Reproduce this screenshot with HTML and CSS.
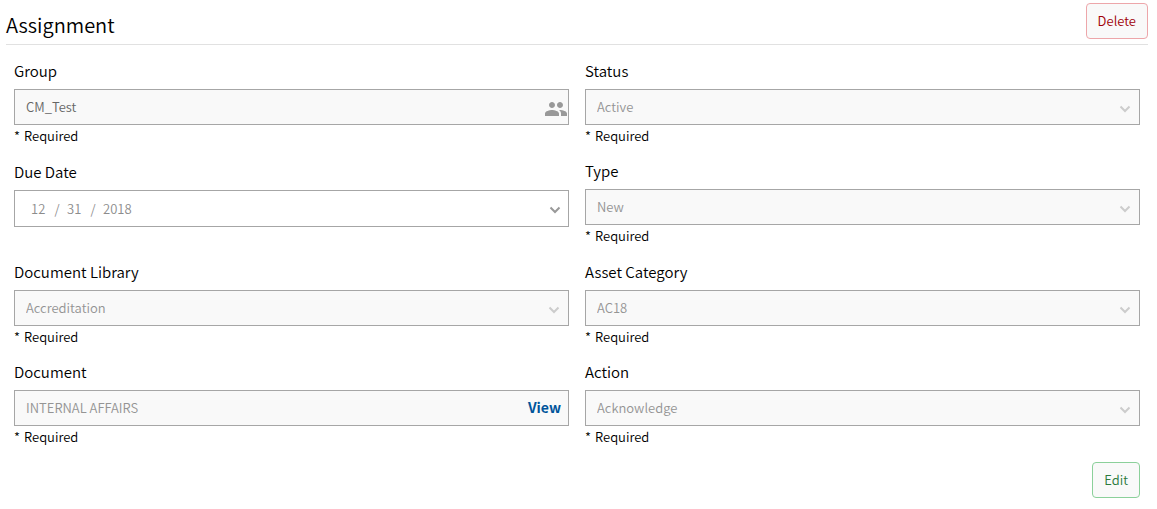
FILE: index.html
```html
<!DOCTYPE html>
<html lang="en">
<head>
<meta charset="utf-8">
<meta name="viewport" content="width=device-width, initial-scale=1">
<title>Assignment</title>
<link rel="stylesheet" href="styles.css">
</head>
<body>
<form class="assignment">
  <header class="header">
    <h1 class="title">Assignment</h1>
    <button class="btn btn-delete" type="button">Delete</button>
  </header>
  <div class="fields">
    <div class="field">
      <label class="label" for="group">Group</label>
      <div class="box">
        <input class="control control-group" id="group" type="text" value="CM_Test" readonly>
        <svg class="people" viewBox="1 5 22 14" aria-hidden="true"><path d="M16 11c1.66 0 2.99-1.34 2.99-3S17.66 5 16 5s-3 1.34-3 3 1.34 3 3 3zm-8 0c1.66 0 2.99-1.34 2.99-3S9.66 5 8 5 5 6.34 5 8s1.34 3 3 3zm0 2c-2.33 0-7 1.17-7 3.5V19h14v-2.500c0-2.330-4.670-3.500-7-3.500zm8 0c-.29 0-.62.02-.97.05 1.160.84 1.970 1.970 1.970 3.450V19h6v-2.500c0-2.330-4.670-3.500-7-3.500z"/></svg>
      </div>
      <p class="note"><span>*</span><span>Required</span></p>
    </div>
    <div class="field">
      <label class="label" for="status">Status</label>
      <div class="box">
        <select class="control" id="status" disabled><option>Active</option></select>
        <svg class="chevron" viewBox="0 0 12 8" aria-hidden="true"><path d="M1.500 1.500 6 6l4.500-4.500"/></svg>
      </div>
      <p class="note"><span>*</span><span>Required</span></p>
    </div>
    <div class="field field-date">
      <label class="label" for="month">Due Date</label>
      <div class="box box-date">
        <input class="date-part" id="month" type="text" value="12" aria-label="Month">
        <span class="slash">/</span>
        <input class="date-part" type="text" value="31" aria-label="Day">
        <span class="slash">/</span>
        <input class="date-part date-year" type="text" value="2018" aria-label="Year">
        <button class="date-toggle" type="button" aria-label="Open calendar"><svg class="chevron chevron-date" viewBox="0 0 12 8" aria-hidden="true"><path d="M1.500 1.500 6 6l4.500-4.500"/></svg></button>
      </div>
    </div>
    <div class="field">
      <label class="label" for="type">Type</label>
      <div class="box">
        <select class="control" id="type" disabled><option>New</option></select>
        <svg class="chevron" viewBox="0 0 12 8" aria-hidden="true"><path d="M1.500 1.500 6 6l4.500-4.500"/></svg>
      </div>
      <p class="note"><span>*</span><span>Required</span></p>
    </div>
    <div class="field">
      <label class="label" for="library">Document Library</label>
      <div class="box">
        <select class="control" id="library" disabled><option>Accreditation</option></select>
        <svg class="chevron" viewBox="0 0 12 8" aria-hidden="true"><path d="M1.500 1.500 6 6l4.500-4.500"/></svg>
      </div>
      <p class="note"><span>*</span><span>Required</span></p>
    </div>
    <div class="field">
      <label class="label" for="category">Asset Category</label>
      <div class="box">
        <select class="control" id="category" disabled><option>AC18</option></select>
        <svg class="chevron" viewBox="0 0 12 8" aria-hidden="true"><path d="M1.500 1.500 6 6l4.500-4.500"/></svg>
      </div>
      <p class="note"><span>*</span><span>Required</span></p>
    </div>
    <div class="field">
      <label class="label" for="document">Document</label>
      <div class="box">
        <input class="control" id="document" type="text" value="INTERNAL AFFAIRS" disabled>
        <a class="view" href="#document">View</a>
      </div>
      <p class="note"><span>*</span><span>Required</span></p>
    </div>
    <div class="field">
      <label class="label" for="action">Action</label>
      <div class="box">
        <select class="control" id="action" disabled><option>Acknowledge</option></select>
        <svg class="chevron" viewBox="0 0 12 8" aria-hidden="true"><path d="M1.500 1.500 6 6l4.500-4.500"/></svg>
      </div>
      <p class="note"><span>*</span><span>Required</span></p>
    </div>
  </div>
  <footer class="footer">
    <button class="btn btn-edit" type="button">Edit</button>
  </footer>
</form>
</body>
</html>
```
FILE: styles.css
```css
* {
  box-sizing: border-box;
}

body {
  margin: 0;
  background: #fff;
  color: #000;
  font-family: "Noto Sans CJK SC", "Open Sans", sans-serif;
  font-size: 13px;
  font-weight: 350;
}

input,
select,
button {
  font: inherit;
}

.assignment {
  padding: 3px 9px 8px 6px;
}

.header {
  display: flex;
  align-items: center;
  justify-content: space-between;
  padding-bottom: 5px;
  border-bottom: 1px solid #e1e1e1;
}

.title {
  margin: 0;
  padding-top: 8px;
  font-size: 20px;
  font-weight: 350;
  line-height: 28px;
}

.btn {
  height: 36px;
  padding: 0 11px;
  border: 1px solid;
  border-radius: 4px;
  background: #f9f9f9;
  line-height: 20px;
}

.btn-delete {
  border-color: #eda6aa;
  color: #a00008;
}

.btn-edit {
  border-color: #8bd09a;
  color: #2c7a3c;
}

.fields {
  display: grid;
  grid-template-columns: 1fr 1fr;
  grid-template-rows: auto minmax(86px, auto);
  gap: 15px 16px;
  padding: 16px 8px 0;
}

.field {
  display: flex;
  flex-direction: column;
}

.field-date {
  padding-top: 1px;
}

.label {
  margin-bottom: 8px;
  font-size: 15px;
  line-height: 20px;
}

.box {
  position: relative;
  display: flex;
  align-items: center;
  height: 36px;
  border: 1px solid #a6a6a6;
  background: #f9f9f9;
}

.control {
  flex: 1;
  min-width: 0;
  height: 100%;
  padding: 0 11px 1px;
  border: 0;
  border-radius: 0;
  outline: 0;
  background: transparent;
  color: #949494;
  opacity: 1;
  appearance: none;
}

.control-group {
  color: #666;
}

.people {
  width: 22px;
  height: 14px;
  margin: 4px 1px 0 0;
  fill: #999;
}

.chevron {
  position: absolute;
  right: 8px;
  top: 15px;
  width: 12px;
  height: 8px;
  fill: none;
  stroke: #ccc;
  stroke-width: 2;
  pointer-events: none;
}

.box-date {
  height: 37px;
  padding-left: 16px;
  background: #fff;
  color: #8c8c8c;
}

.date-part {
  width: 16px;
  padding: 0;
  border: 0;
  background: transparent;
  color: inherit;
}

.date-year {
  width: 32px;
}

.slash {
  width: 20px;
  text-align: center;
}

.date-toggle {
  width: 26px;
  height: 100%;
  margin-left: auto;
  padding: 0;
  border: 0;
  background: transparent;
}

.chevron-date {
  position: static;
  stroke: #999;
}

.view {
  padding: 0 7px 3px 0;
  color: #00559b;
  font-size: 14px;
  font-weight: 700;
  line-height: 20px;
  text-decoration: none;
}

.note {
  display: flex;
  gap: 4px;
  margin: 1px 0 0;
  line-height: 20px;
}

.footer {
  display: flex;
  justify-content: flex-end;
  padding: 15px 8px 0;
}
```
